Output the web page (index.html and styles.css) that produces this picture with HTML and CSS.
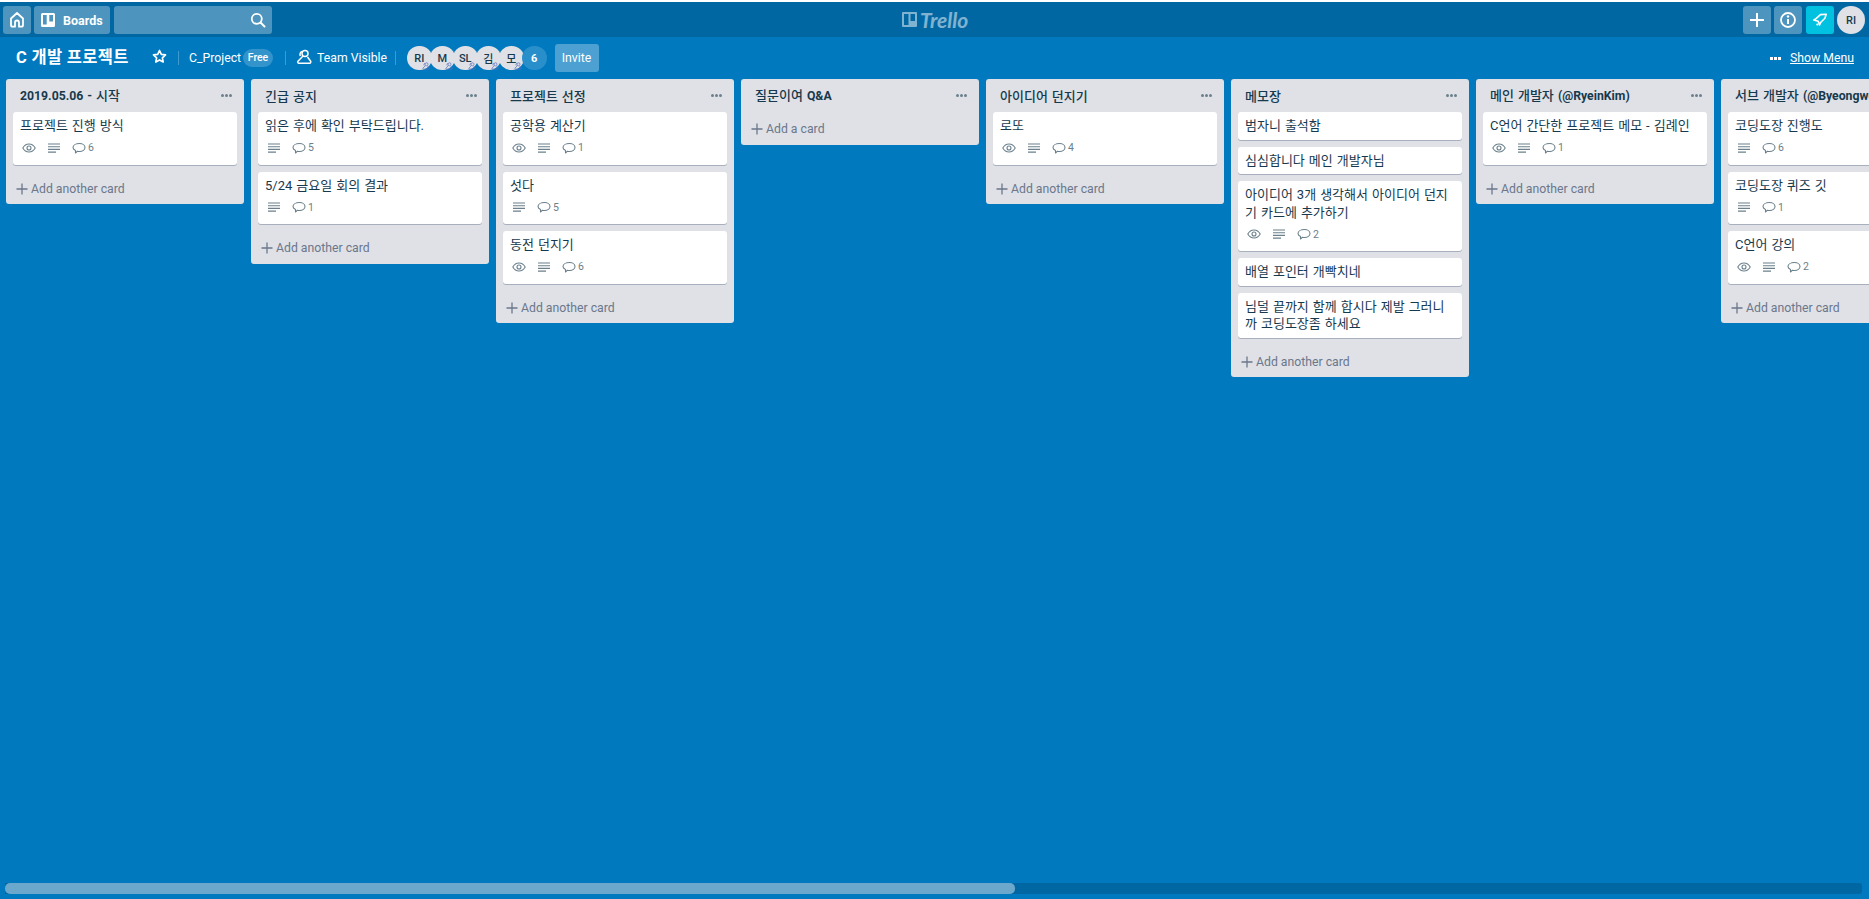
FILE: index.html
```html
<!DOCTYPE html>
<html lang="ko">
<head>
<meta charset="utf-8">
<title>C 개발 프로젝트 | Trello</title>
<link rel="stylesheet" href="styles.css">
</head>
<body>
<svg class="sprites" width="0" height="0" aria-hidden="true">
  <symbol id="i-eye" viewBox="0 0 14 14"><path d="M7 3C4.200 3 2 4.800 .8 7 2 9.200 4.200 11 7 11s5-1.800 6.200-4C12 4.800 9.800 3 7 3z" fill="none" stroke="currentColor" stroke-width="1.100"/><circle cx="7" cy="7" r="2" fill="none" stroke="currentColor" stroke-width="1.100"/></symbol>
  <symbol id="i-desc" viewBox="0 0 14 14"><path d="M1 3h12M1 5.700h12M1 8.400h12M1 11.100h8" fill="none" stroke="currentColor" stroke-width="1.100"/></symbol>
  <symbol id="i-comment" viewBox="0 0 14 14"><path d="M7.500 2.500c3 0 5.500 1.600 5.500 4s-2.500 4-5.500 4c-.7 0-1.400-.1-2-.3L3.500 12v-2.500C2 8.800 1 7.800 1 6.500c0-2.400 3-4 6.500-4z" fill="none" stroke="currentColor" stroke-width="1.100" stroke-linejoin="round"/></symbol>
  <symbol id="i-plus" viewBox="0 0 12 12"><path d="M6 .5v11M.5 6h11" fill="none" stroke="currentColor" stroke-width="1.300"/></symbol>
  <symbol id="i-team" viewBox="0 0 16 16"><circle cx="9" cy="4.500" r="3" fill="none" stroke="currentColor" stroke-width="1.500"/><path d="M6.800 7.300 2 12.200c-.7 1 0 2 1 2h10.500c1.200 0 1.700-1.200 1-2.200l-3-4M6 2.500C4.300 3 3.500 5 4.300 7" fill="none" stroke="currentColor" stroke-width="1.500" stroke-linejoin="round"/></symbol>
</svg>

<header class="topbar">
  <div class="topbar-left">
    <button class="tb-btn tb-home" aria-label="Home">
      <svg width="18" height="18" viewBox="0 0 18 18"><path d="M9 2 3 7.500V14c0 1 .7 1.700 1.700 1.700h2.300v-4.200c0-1.100.9-2 2-2s2 .9 2 2v4.200h2.300c1 0 1.700-.7 1.700-1.700V7.500z" fill="none" stroke="#fff" stroke-width="1.800" stroke-linejoin="round"/></svg>
    </button>
    <button class="tb-btn tb-boards">
      <svg width="14" height="14" viewBox="0 0 14 14"><path fill-rule="evenodd" d="M1.500 0h11A1.500 1.500 0 0 1 14 1.500v11a1.500 1.500 0 0 1-1.500 1.500h-11A1.500 1.500 0 0 1 0 12.500v-11A1.500 1.500 0 0 1 1.500 0zM2 2v9.500h3.700V2zm6.300 0v6.500H12V2z" fill="#fff"/></svg>
      <span>Boards</span>
    </button>
    <div class="tb-search">
      <svg width="16" height="16" viewBox="0 0 16 16"><circle cx="6.800" cy="6.800" r="5" fill="none" stroke="#fff" stroke-width="1.800"/><path d="m10.500 10.500 4 4" stroke="#fff" stroke-width="2" stroke-linecap="round"/></svg>
    </div>
  </div>
  <div class="logo">
    <svg width="15" height="15" viewBox="0 0 15 15"><path fill-rule="evenodd" d="M1 0h13a1 1 0 0 1 1 1v13a1 1 0 0 1-1 1H1a1 1 0 0 1-1-1V1a1 1 0 0 1 1-1zm1 2v11h4.500V2zm6.500 0v7H13V2z" fill="#fff"/></svg>
    <span>Trello</span>
  </div>
  <div class="topbar-right">
    <button class="tb-btn tb-square" aria-label="Create">
      <svg width="16" height="16" viewBox="0 0 16 16"><path d="M8 1v14M1 8h14" stroke="#fff" stroke-width="2"/></svg>
    </button>
    <button class="tb-btn tb-square" aria-label="Info">
      <svg width="18" height="18" viewBox="0 0 18 18"><circle cx="9" cy="9" r="7" fill="none" stroke="#fff" stroke-width="1.800"/><path d="M9 8v5" stroke="#fff" stroke-width="2"/><circle cx="9" cy="5.500" r="1.200" fill="#fff"/></svg>
    </button>
    <button class="tb-btn tb-square tb-cyan" aria-label="Notifications">
      <svg width="16" height="16" viewBox="0 0 18 18"><path d="M16 2.500 9.500 3 4.500 7.500 2 9l5 1.500 1.500 4 1.500-3 4.500-4.500z" fill="none" stroke="#fff" stroke-width="1.800" stroke-linejoin="round"/><circle cx="6" cy="14" r="1.200" fill="#fff"/></svg>
    </button>
    <div class="me">RI</div>
  </div>
</header>

<section class="boardbar">
  <h1 class="board-name">C 개발 프로젝트</h1>
  <svg class="star" width="15" height="15" viewBox="0 0 15 15"><path d="m7.500 1.500 1.800 3.900 4.200.5-3.100 2.900.8 4.200-3.700-2.100L3.800 13l.8-4.200L1.500 5.900l4.200-.5z" fill="none" stroke="#fff" stroke-width="1.700" stroke-linejoin="round"/></svg>
  <span class="sep"></span>
  <span class="bb-text bb-project">C_Project</span>
  <span class="free">Free</span>
  <span class="sep sep-b"></span>
  <svg class="team" width="16" height="16" aria-hidden="true"><use href="#i-team"/></svg>
  <span class="bb-text bb-visible">Team Visible</span>
  <span class="sep sep-c"></span>
  <div class="members">
    <div class="member">RI<i class="mini"><svg width="8" height="8"><use href="#i-team"/></svg></i></div>
    <div class="member">M<i class="mini"><svg width="8" height="8"><use href="#i-team"/></svg></i></div>
    <div class="member">SL<i class="mini"><svg width="8" height="8"><use href="#i-team"/></svg></i></div>
    <div class="member">김<i class="mini"><svg width="8" height="8"><use href="#i-team"/></svg></i></div>
    <div class="member">모<i class="mini"><svg width="8" height="8"><use href="#i-team"/></svg></i></div>
    <div class="member member-more">6</div>
  </div>
  <button class="invite">Invite</button>
  <div class="show-menu"><span class="dots"><b></b><b></b><b></b></span><a>Show Menu</a></div>
</section>

<main class="lists">
  <section class="list">
    <div class="list-head"><h2><b class="lat">2019.05.06 -</b> 시작</h2><span class="more"><b></b><b></b><b></b></span></div>
    <article class="card"><p>프로젝트 진행 방식</p><div class="badges"><svg class="b-i b-eye"><use href="#i-eye"/></svg><svg class="b-i"><use href="#i-desc"/></svg><svg class="b-i"><use href="#i-comment"/></svg><span>6</span></div></article>
    <div class="add"><svg width="12" height="12"><use href="#i-plus"/></svg>Add another card</div>
  </section>
  <section class="list">
    <div class="list-head"><h2>긴급 공지</h2><span class="more"><b></b><b></b><b></b></span></div>
    <article class="card"><p>읽은 후에 확인 부탁드립니다.</p><div class="badges"><svg class="b-i"><use href="#i-desc"/></svg><svg class="b-i"><use href="#i-comment"/></svg><span>5</span></div></article>
    <article class="card"><p>5/24 금요일 회의 결과</p><div class="badges"><svg class="b-i"><use href="#i-desc"/></svg><svg class="b-i"><use href="#i-comment"/></svg><span>1</span></div></article>
    <div class="add"><svg width="12" height="12"><use href="#i-plus"/></svg>Add another card</div>
  </section>
  <section class="list">
    <div class="list-head"><h2>프로젝트 선정</h2><span class="more"><b></b><b></b><b></b></span></div>
    <article class="card"><p>공학용 계산기</p><div class="badges"><svg class="b-i b-eye"><use href="#i-eye"/></svg><svg class="b-i"><use href="#i-desc"/></svg><svg class="b-i"><use href="#i-comment"/></svg><span>1</span></div></article>
    <article class="card"><p>섯다</p><div class="badges"><svg class="b-i"><use href="#i-desc"/></svg><svg class="b-i"><use href="#i-comment"/></svg><span>5</span></div></article>
    <article class="card"><p>동전 던지기</p><div class="badges"><svg class="b-i b-eye"><use href="#i-eye"/></svg><svg class="b-i"><use href="#i-desc"/></svg><svg class="b-i"><use href="#i-comment"/></svg><span>6</span></div></article>
    <div class="add"><svg width="12" height="12"><use href="#i-plus"/></svg>Add another card</div>
  </section>
  <section class="list">
    <div class="list-head"><h2>질문이여 <b class="lat">Q&amp;A</b></h2><span class="more"><b></b><b></b><b></b></span></div>
    <div class="add"><svg width="12" height="12"><use href="#i-plus"/></svg>Add a card</div>
  </section>
  <section class="list">
    <div class="list-head"><h2>아이디어 던지기</h2><span class="more"><b></b><b></b><b></b></span></div>
    <article class="card"><p>로또</p><div class="badges"><svg class="b-i b-eye"><use href="#i-eye"/></svg><svg class="b-i"><use href="#i-desc"/></svg><svg class="b-i"><use href="#i-comment"/></svg><span>4</span></div></article>
    <div class="add"><svg width="12" height="12"><use href="#i-plus"/></svg>Add another card</div>
  </section>
  <section class="list">
    <div class="list-head"><h2>메모장</h2><span class="more"><b></b><b></b><b></b></span></div>
    <article class="card"><p>범자니 출석함</p></article>
    <article class="card"><p>심심합니다 메인 개발자님</p></article>
    <article class="card"><p>아이디어 3개 생각해서 아이디어 던지기 카드에 추가하기</p><div class="badges"><svg class="b-i b-eye"><use href="#i-eye"/></svg><svg class="b-i"><use href="#i-desc"/></svg><svg class="b-i"><use href="#i-comment"/></svg><span>2</span></div></article>
    <article class="card"><p>배열 포인터 개빡치네</p></article>
    <article class="card"><p>님덜 끝까지 함께 합시다 제발 그러니까 코딩도장좀 하세요</p></article>
    <div class="add"><svg width="12" height="12"><use href="#i-plus"/></svg>Add another card</div>
  </section>
  <section class="list">
    <div class="list-head"><h2>메인 개발자 <b class="lat">(@RyeinKim)</b></h2><span class="more"><b></b><b></b><b></b></span></div>
    <article class="card"><p>C언어 간단한 프로젝트 메모 - 김례인</p><div class="badges"><svg class="b-i b-eye"><use href="#i-eye"/></svg><svg class="b-i"><use href="#i-desc"/></svg><svg class="b-i"><use href="#i-comment"/></svg><span>1</span></div></article>
    <div class="add"><svg width="12" height="12"><use href="#i-plus"/></svg>Add another card</div>
  </section>
  <section class="list">
    <div class="list-head"><h2>서브 개발자 <b class="lat">(@ByeongwookKim)</b></h2><span class="more"><b></b><b></b><b></b></span></div>
    <article class="card"><p>코딩도장 진행도</p><div class="badges"><svg class="b-i"><use href="#i-desc"/></svg><svg class="b-i"><use href="#i-comment"/></svg><span>6</span></div></article>
    <article class="card"><p>코딩도장 퀴즈 깃</p><div class="badges"><svg class="b-i"><use href="#i-desc"/></svg><svg class="b-i"><use href="#i-comment"/></svg><span>1</span></div></article>
    <article class="card"><p>C언어 강의</p><div class="badges"><svg class="b-i b-eye"><use href="#i-eye"/></svg><svg class="b-i"><use href="#i-desc"/></svg><svg class="b-i"><use href="#i-comment"/></svg><span>2</span></div></article>
    <div class="add"><svg width="12" height="12"><use href="#i-plus"/></svg>Add another card</div>
  </section>
</main>

<div class="scrollbar"><div class="scroll-thumb"></div></div>
</body>
</html>
```
FILE: styles.css
```css
* { box-sizing: border-box; }
html, body { height: 100%; }
body {
  margin: 0;
  background: #0079bf;
  border-top: 2px solid #fff;
  font-family: Roboto, "Noto Sans CJK KR", sans-serif;
  font-size: 12.250px;
  color: #17394d;
  overflow: hidden;
  display: flex;
  flex-direction: column;
}
.sprites { position: absolute; }
button { font: inherit; border: 0; padding: 0; color: #fff; }

/* top bar */
.topbar {
  flex: none;
  height: 35px;
  background: #0067a3;
  padding: 4px 4px 3px 3px;
  display: flex;
  align-items: center;
  justify-content: space-between;
  position: relative;
}
.topbar-left, .topbar-right { display: flex; gap: 3.500px; height: 28px; }
.tb-btn {
  height: 28px;
  border-radius: 3px;
  background: rgba(255,255,255,.3);
  display: flex;
  align-items: center;
  justify-content: center;
}
.tb-home { width: 27.500px; }
.tb-boards { width: 76px; gap: 8px; justify-content: flex-start; padding-left: 7px; font-weight: 700; font-size: 12.500px; }
.tb-search {
  width: 158px;
  height: 28px;
  border-radius: 3px;
  background: rgba(255,255,255,.3);
  display: flex;
  align-items: center;
  justify-content: flex-end;
  padding-right: 6px;
}
.logo {
  position: absolute;
  left: 902px;
  top: 9px;
  display: flex;
  align-items: center;
  gap: 3px;
  height: 17px;
  opacity: .5;
}
.logo span {
  font: italic 700 21px/17px "Lato", sans-serif;
  color: #fff;
}
.tb-square { width: 28px; }
.tb-cyan { background: #00c2e0; }
.me {
  width: 28px;
  height: 28px;
  border-radius: 50%;
  background: #dfe1e6;
  color: #17394d;
  font-weight: 500;
  font-size: 11px;
  display: flex;
  align-items: center;
  justify-content: center;
}

/* board bar */
.boardbar {
  flex: none;
  height: 42px;
  padding: 7px 15px 7px 16px;
  display: flex;
  align-items: center;
  color: #fff;
}
.board-name {
  margin: 0;
  font-size: 16.500px;
  letter-spacing: .3px;
  font-weight: 700;
  line-height: 28px;
  width: 136px;
  white-space: nowrap;
}
.star { flex: none; margin-bottom: 3px; }
.sep { width: 1px; height: 14px; background: rgba(255,255,255,.25); margin: 0 10px 0 11px; flex: none; }
.sep-b { margin: 0 10px 0 12px; }
.sep-c { margin: 0 11px 0 10px; }
.bb-text { font-size: 12.250px; white-space: nowrap; }
.bb-project { width: 49px; }
.bb-visible { width: 68px; }
.free {
  margin-left: 5px;
  width: 30px;
  text-align: center;
  height: 18px;
  line-height: 18px;
  border-radius: 9px;
  background: rgba(255,255,255,.2);
  font-size: 10.500px;
  font-weight: 500;
}
.team { flex: none; margin: 0 5px 2px 0; color: #fff; }
.members { display: flex; }
.member {
  position: relative;
  width: 24.500px;
  height: 24.500px;
  margin-right: -1.500px;
  border-radius: 50%;
  background: #dfe1e6;
  color: #17394d;
  font-weight: 500;
  font-size: 11px;
  display: flex;
  align-items: center;
  justify-content: center;
}
.member-more { background: #298fca; color: #fff; margin-right: 0; font-weight: 700; }
.mini {
  position: absolute;
  right: 2px;
  bottom: 0;
  width: 8px;
  height: 8px;
  color: #5f72bd;
  display: flex;
  align-items: center;
  justify-content: center;
}
.invite {
  margin-left: 8px;
  width: 44px;
  height: 28px;
  border-radius: 3px;
  background: rgba(255,255,255,.3);
  font-size: 12.250px;
}
.show-menu { margin-left: auto; display: flex; align-items: center; gap: 9px; }
.show-menu a { text-decoration: underline; font-size: 12.250px; color: #fff; }
.dots { display: flex; gap: 1px; }
.dots b { width: 3px; height: 3px; background: #fff; }

/* lists */
.lists {
  flex: 1;
  min-height: 0;
  padding: 0 0 0 6px;
  display: flex;
  align-items: flex-start;
  gap: 7px;
  overflow: hidden;
}
.list {
  flex: none;
  width: 238px;
  background: #dfe1e6;
  border-radius: 3px;
  padding: 0 7px;
}
.list-head { height: 33px; padding: 2px 0 0 7px; display: flex; align-items: center; justify-content: space-between; }
.list-head h2 {
  margin: 0;
  font-size: 13px;
  font-weight: 500;
  word-spacing: .8px;
  line-height: 17.500px;
  white-space: nowrap;
  color: #17394d;
}
.lat { font-size: 12.250px; font-weight: 700; }
.more { display: flex; gap: 1px; margin: 0 5px 2px 0; flex: none; }
.more b { width: 3px; height: 3px; background: #6b808c; border-radius: 50%; }
.card {
  background: #fff;
  border-radius: 3px;
  box-shadow: 0 1px 0 rgba(9,30,66,.25);
  padding: 5.250px 7px 4.750px;
  margin-bottom: 7px;
}
.card p {
  margin: 0;
  font-size: 13px;
  word-spacing: .8px;
  line-height: 17.500px;
  word-break: break-all;
}
.badges {
  height: 21px;
  margin: 2.500px 0 1.500px;
  display: flex;
  align-items: center;
  color: #6b808c;
  font-size: 10.500px;
  padding-left: 2px;
}
.b-i { width: 14px; height: 14px; margin-right: 11px; flex: none; }
.b-i:has(+ span) { margin-right: 2px; }
.add {
  margin-left: 3px;
  height: 32.500px;
  padding-top: 1.500px;
  display: flex;
  align-items: center;
  gap: 3px;
  color: #6b778c;
}

/* fake horizontal scrollbar */
.scrollbar {
  flex: none;
  height: 11px;
  margin: 0 7px 5px 5px;
  background: #0067a3;
  border-radius: 0 3px 3px 0;
}
.scroll-thumb { width: 1010px; height: 11px; background: #6ca7cc; border-radius: 5px; }
```
